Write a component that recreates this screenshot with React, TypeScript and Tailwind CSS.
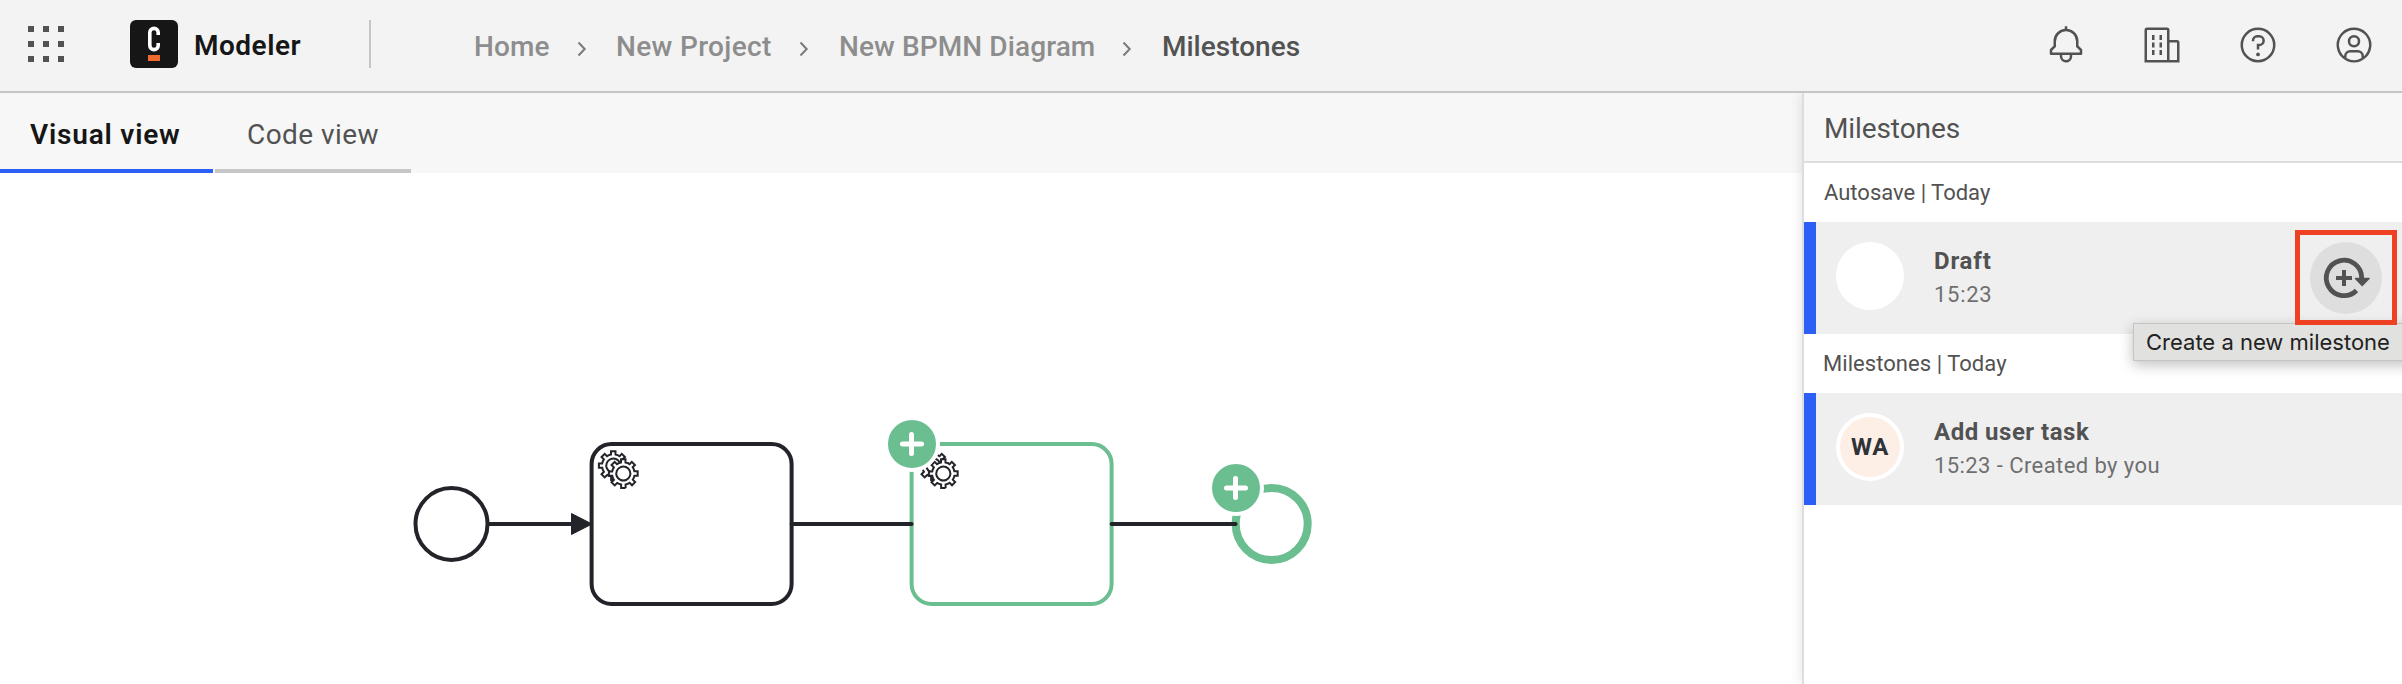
import React from 'react';

const DARK = '#22242a';
const GREEN = '#6bbe8f';

const GEAR =
  'M12,18 v-1.71335 c0.352326,-0.0705 0.703932,-0.17838 1.047628,-0.32133 0.344416,-0.14465 0.665822,-0.32133 0.966377,-0.52145 l1.19431,1.18005 1.567487,-1.57688 -1.195028,-1.18014 c0.403376,-0.61394 0.683079,-1.29908 0.825447,-2.01824 l1.622133,-0.01 v-2.2196 l-1.636514,0.01 c-0.07333,-0.35153 -0.178319,-0.70024 -0.323564,-1.04372 -0.145244,-0.34406 -0.321407,-0.6644 -0.522735,-0.96217 l1.131035,-1.13631 -1.583305,-1.56293 -1.129598,1.13589 c-0.614052,-0.40108 -1.302883,-0.68093 -2.022633,-0.82247 l0.0093,-1.61852 h-2.241173 l0.0042,1.63124 c-0.353763,0.0736 -0.705369,0.17977 -1.049785,0.32371 -0.344415,0.14437 -0.665102,0.32092 -0.9635006,0.52006 l-1.1698628,-1.15823 -1.5667691,1.5792 1.1684265,1.15669 c-0.4026573,0.61283 -0.68308,1.29797 -0.8247287,2.01713 l-1.6588041,0.003 v2.22174 l1.6724648,-0.006 c0.073327,0.35077 0.1797598,0.70243 0.3242851,1.04472 0.1452428,0.34448 0.3214064,0.6644 0.5227339,0.96066 l-1.1993431,1.19723 1.5840256,1.56011 1.1964668,-1.19348 c0.6140517,0.40346 1.3028827,0.68232 2.0233517,0.82331 l7.19e-4,1.69892 h2.226848 z m0.221462,-3.9957 c-1.788948,0.7502 -3.8576,-0.0928 -4.6097055,-1.87438 -0.7521065,-1.78321 0.090598,-3.84627 1.8802645,-4.59604 1.78823,-0.74936 3.856881,0.0929 4.608987,1.87437 0.752106,1.78165 -0.0906,3.84612 -1.879546,4.59605 z';

function Icon({ children }: { children: React.ReactNode }) {
  return (
    <svg width="40" height="40" viewBox="0 0 32 32" fill="#525252">
      {children}
    </svg>
  );
}

function Chevron({ className }: { className: string }) {
  return (
    <svg width="10" height="16" viewBox="0 0 10 16" fill="none" stroke="#7a7a7a" strokeWidth="2" className={className}>
      <path d="M1.5 1.5 7.7 8 1.5 14.5" />
    </svg>
  );
}

function Header() {
  return (
    <header className="flex h-[93px] shrink-0 items-center border-b-2 border-[#c6c6c6] bg-[#f3f3f3] text-[28px] leading-10">
      <div className="mb-[3px] ml-7 grid grid-cols-3 gap-[9px]">
        {Array.from({ length: 9 }, (_, i) => (
          <span key={i} className="size-1.5 bg-[#525252]" />
        ))}
      </div>
      <svg width="48" height="48" viewBox="0 0 48 48" className="mb-[3px] ml-[66px]">
        <rect width="48" height="48" rx="6" fill="#161616" />
        <path d="M28.2 15V12.6a4.2 4.2 0 0 0-8.4 0V25.4a4.2 4.2 0 0 0 8.4 0V23" fill="none" stroke="#fff" strokeWidth="3.6" />
        <rect x="18" y="35" width="12" height="6" fill="#f06a2f" />
      </svg>
      <span className="ml-4 w-[175px] font-semibold tracking-[0.5px] text-[#161616]">Modeler</span>
      <span className="mb-[3px] h-12 w-0.5 bg-[#c6c6c6]" />
      <nav className="mt-0.5 flex items-center whitespace-nowrap font-medium text-[#8d8d8d]">
        <span className="ml-[103px] w-[103px] tracking-[0.1px]">Home</span>
        <Chevron className="mt-1" />
        <span className="ml-[29px] w-[183px] tracking-[0.35px]">New Project</span>
        <Chevron className="mt-1" />
        <span className="ml-[30px] w-[283px] tracking-[0.1px]">New BPMN Diagram</span>
        <Chevron className="mt-1" />
        <span className="ml-[30px] text-[#525252]">Milestones</span>
      </nav>
      <div className="mb-px ml-auto mr-7 flex gap-14">
        <Icon>
          <path d="M28.7071,19.293,26,16.5859V13a10.0136,10.0136,0,0,0-9-9.9492V1H15V3.0508A10.0136,10.0136,0,0,0,6,13v3.5859L3.2929,19.293A1,1,0,0,0,3,20v3a1,1,0,0,0,1,1h7v.7768a5.152,5.152,0,0,0,4.5,5.1987A5.0057,5.0057,0,0,0,21,25V24h7a1,1,0,0,0,1-1V20A1,1,0,0,0,28.7071,19.293ZM19,25a3,3,0,0,1-6,0V24h6Zm8-3H5V20.4141L7.707,17.707A1,1,0,0,0,8,17V13a8,8,0,0,1,16,0v4a1,1,0,0,0,.293.707L27,20.4141Z" />
        </Icon>
        <Icon>
          <path d="M8,8h2v4H8ZM8,14h2v4H8ZM14,8h2v4h-2ZM14,14h2v4h-2ZM8,20h2v4H8ZM14,20h2v4h-2Z" />
          <path d="M30,14a2,2,0,0,0-2-2H22V4a2,2,0,0,0-2-2H4A2,2,0,0,0,2,4V30H30ZM4,4H20V28H4ZM22,28V14h6V28Z" />
        </Icon>
        <Icon>
          <path d="M16,2A14,14,0,1,0,30,16,14,14,0,0,0,16,2Zm0,26A12,12,0,1,1,28,16,12,12,0,0,1,16,28Z" />
          <circle cx="16" cy="23.5" r="1.5" />
          <path d="M17,8H15.5A4.49,4.49,0,0,0,11,12.5V13h2v-.5A2.5,2.5,0,0,1,15.5,10H17a2.5,2.5,0,0,1,0,5H15v4.5h2V17a4.5,4.5,0,0,0,0-9Z" />
        </Icon>
        <Icon>
          <path d="M16,8a5,5,0,1,0,5,5A5,5,0,0,0,16,8Zm0,8a3,3,0,1,1,3-3A3.0034,3.0034,0,0,1,16,16Z" />
          <path d="M16,2A14,14,0,1,0,30,16,14.0158,14.0158,0,0,0,16,2ZM10,26.3765V25a3.0033,3.0033,0,0,1,3-3h6a3.0033,3.0033,0,0,1,3,3v1.3765a11.8989,11.8989,0,0,1-12,0Zm13.9925-1.4507A5.0016,5.0016,0,0,0,19,20H13a5.0016,5.0016,0,0,0-4.9925,4.9258,12,12,0,1,1,15.985,0Z" />
        </Icon>
      </div>
    </header>
  );
}

function Tabs() {
  return (
    <div className="flex h-20 gap-0.5 bg-[#f7f7f7] text-[28px] leading-10">
      <div className="w-[213px] border-b-4 border-[#2c5ff6] pl-[30px] pt-[22px] font-semibold tracking-[0.8px] text-[#161616]">
        Visual view
      </div>
      <div className="w-[196px] border-b-4 border-[#c6c6c6] pl-8 pt-[22px] tracking-[0.45px] text-[#525252]">
        Code view
      </div>
    </div>
  );
}

function Gears({ x, y }: { x: number; y: number }) {
  return (
    <g fill="#fff" stroke={DARK}>
      <path d={GEAR} transform={`translate(${x} ${y}) scale(2)`} />
      <circle cx={x + 31.6} cy={y + 29.8} r="10" stroke="none" />
      <path d={GEAR} transform={`translate(${x + 10} ${y + 8}) scale(2)`} />
    </g>
  );
}

function AddedBadge({ x, y }: { x: number; y: number }) {
  return (
    <g>
      <circle cx={x} cy={y} r="26" fill={GREEN} stroke="#fff" strokeWidth="4" />
      <path d={`M${x - 9.5} ${y}h19M${x - 0.5} ${y - 9.5}v19`} stroke="#fff" strokeWidth="5" strokeLinecap="round" />
    </g>
  );
}

function Diagram() {
  return (
    <svg width="1802" height="511" viewBox="0 173 1802 511" fill="none" strokeWidth="4" className="block">
      <circle cx="451.5" cy="524" r="36" stroke={DARK} />
      <rect x="591.6" y="444" width="200" height="160" rx="20" stroke={DARK} />
      <g strokeWidth="1">
        <Gears x={591.6} y={444} />
      </g>
      <path d="M488 524h84" stroke={DARK} />
      <path d="M571.5 513.5v21l20.5-10.5z" fill={DARK} stroke={DARK} strokeWidth="1" strokeLinejoin="round" />
      <rect x="911.6" y="444" width="200" height="160" rx="20" stroke={GREEN} />
      <g strokeWidth="1">
        <Gears x={911.6} y={444} />
      </g>
      <circle cx="1271.7" cy="524" r="36" stroke={GREEN} strokeWidth="8" />
      <path d="M791.6 524h120M1111.6 524h124" stroke={DARK} strokeLinecap="round" />
      <AddedBadge x={912} y={444} />
      <AddedBadge x={1236} y={488} />
    </svg>
  );
}

function Entry({ avatar, title, detail, action }: { avatar: React.ReactNode; title: React.ReactNode; detail: React.ReactNode; action?: React.ReactNode }) {
  return (
    <div className="relative flex h-28 items-center border-l-12 border-[#2c5ff6] bg-[#efefef]">
      {avatar}
      <div className="mb-px ml-[30px] leading-[34px]">
        <div className="text-[24px] font-bold text-[#525252]">{title}</div>
        <div className="text-[22px] text-[#6f6f6f]">{detail}</div>
      </div>
      {action}
    </div>
  );
}

function MilestoneAction() {
  return (
    <>
      <button className="ml-auto mr-5 flex size-[72px] items-center justify-center rounded-full bg-[#dedede]">
        <svg width="52" height="48" viewBox="0 0 52 48" fill="none" stroke="#525252">
          <path d="M41.7 24A17.7 17.7 0 1 0 36.5 36.5" strokeWidth="4.8" />
          <path d="M24 16v16M16 24h16" strokeWidth="4" />
          <path d="M35.5 24.5h13.5l-6.8 7z" fill="#525252" strokeWidth="1.5" strokeLinejoin="round" />
        </svg>
      </button>
      <div className="absolute left-[317px] top-[101px] z-10 h-[38px] w-[280px] whitespace-nowrap border border-[#c4c4c2] bg-[#e1e1df] pl-3 font-[Inter,sans-serif] text-[22px] leading-[37px] text-[#222] shadow-[0_4px_14px_rgba(0,0,0,0.25)]">
        Create a new milestone
      </div>
      <div className="absolute left-[479px] top-2 z-20 h-[95px] w-[102px] border-5 border-[#ee4023]" />
    </>
  );
}

function Panel() {
  return (
    <aside className="relative w-[600px] shrink-0 border-l-2 border-[#dddddd] bg-white text-[#525252] shadow-[0_0_12px_rgba(0,0,0,0.12)]">
      <h2 className="h-[70px] border-b-2 border-[#dddddd] bg-[#f7f7f7] pl-5 pt-[3px] text-[28px] leading-[66px] tracking-[-0.1px]">
        Milestones
      </h2>
      <div className="pl-5 text-[22px] leading-[59px]">Autosave | Today</div>
      <Entry
        avatar={<div className="mb-1 ml-5 size-[68px] rounded-full bg-white" />}
        title={<span className="tracking-[0.8px]">Draft</span>}
        detail={<span className="tracking-[0.7px]">15:23</span>}
        action={<MilestoneAction />}
      />
      <div className="pl-[19px] text-[22px] leading-[59px] tracking-[0.05px]">Milestones | Today</div>
      <Entry
        avatar={
          <div className="mb-1 ml-5 flex size-[68px] items-center justify-center rounded-full border-4 border-white bg-[#fdefe6] text-[24px] font-bold tracking-[0.8px] text-[#2f3338]">
            WA
          </div>
        }
        title={<span className="tracking-[0.5px]">Add user task</span>}
        detail={<span className="tracking-[0.42px]">15:23 - Created by you</span>}
      />
    </aside>
  );
}

export default function App() {
  return (
    <div className="flex h-[684px] w-[2402px] flex-col overflow-hidden bg-white font-[Roboto,sans-serif]">
      <Header />
      <div className="flex flex-1 overflow-hidden">
        <main className="w-[1802px] shrink-0">
          <Tabs />
          <Diagram />
        </main>
        <Panel />
      </div>
    </div>
  );
}
